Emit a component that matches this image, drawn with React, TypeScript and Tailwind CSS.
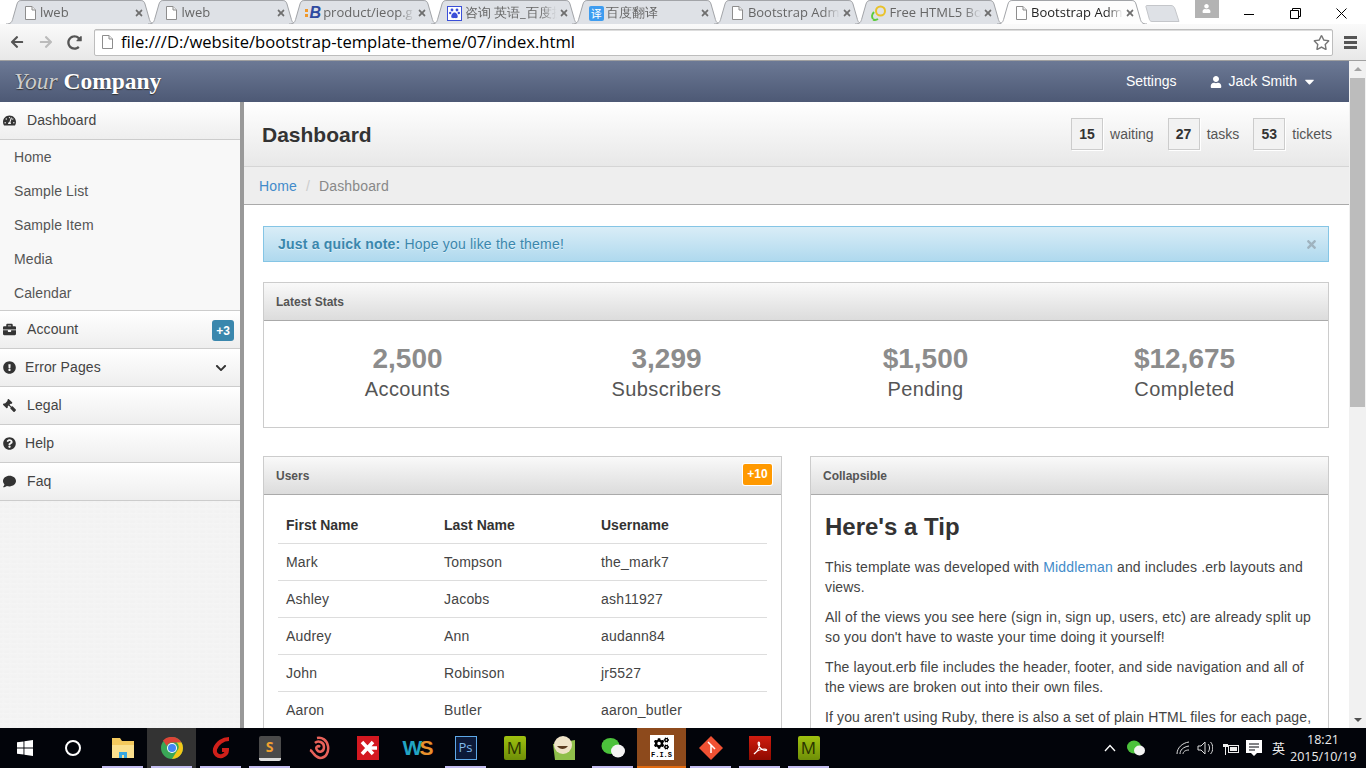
import type { ReactNode } from "react";
import {
  FaArrowLeft,
  FaArrowRight,
  FaBriefcase,
  FaCaretDown,
  FaChevronDown,
  FaCogs,
  FaComment,
  FaExclamationCircle,
  FaGavel,
  FaQuestionCircle,
  FaRedoAlt,
  FaRegStar,
  FaTachometerAlt,
  FaTimes,
  FaUser,
} from "react-icons/fa";

const rows = [
  ["Mark", "Tompson", "the_mark7"],
  ["Ashley", "Jacobs", "ash11927"],
  ["Audrey", "Ann", "audann84"],
  ["John", "Robinson", "jr5527"],
  ["Aaron", "Butler", "aaron_butler"],
];

const stats = [
  ["2,500", "Accounts"],
  ["3,299", "Subscribers"],
  ["$1,500", "Pending"],
  ["$12,675", "Completed"],
];

function DocIcon() {
  return (
    <svg width="11" height="14" viewBox="0 0 11 14" className="shrink-0">
      <path d="M.5.5h6.5l3.5 3.5v9.5h-10z" fill="#fff" stroke="#8d8d8d" />
      <path d="M7 .5v3.5h3.5" fill="#eee" stroke="#8d8d8d" />
    </svg>
  );
}

function Tab({ icon, title, active }: { icon: ReactNode; title: string; active?: boolean }) {
  return (
    <div className={`relative -mr-[8.430px] flex h-[24px] w-[150px] shrink-0 items-center pl-[16px] pr-[12px] pt-[2px] ${active ? "z-10" : ""}`}>
      <svg viewBox="0 0 150 24" width="150" height="24" className="absolute inset-0">
        <path
          d="M0 24 C5 24 6 22 7 18 L11 4 C12 1 13 .5 16 .5 H134 C137 .5 138 1 139 4 L143 18 C144 22 145 24 150 24"
          fill={active ? "#fdfdfd" : "#dee1e6"}
          stroke="#a2a4a8"
        />
      </svg>
      <span className="relative flex w-[16px] shrink-0 justify-center">{icon}</span>
      <span
        className={`relative ml-[2px] w-[92px] overflow-hidden whitespace-nowrap text-[13px] [mask-image:linear-gradient(to_right,black_82%,transparent)] ${active ? "text-[#222]" : "text-[#666]"}`}
      >
        {title}
      </span>
      <FaTimes className="relative ml-auto text-[10px] text-[#6e6e6e]" />
    </div>
  );
}

function BrowserChrome() {
  return (
    <div className="shrink-0 font-['Open_Sans',sans-serif]">
      <div className="flex h-[24px] items-start bg-white pl-[6px]">
        <Tab icon={<DocIcon />} title="lweb" />
        <Tab icon={<DocIcon />} title="lweb" />
        <Tab
          icon={
            <span className="flex items-center">
              <svg width="4" height="9" viewBox="0 0 4 9" fill="#f0982a">
                <rect width="3" height="3" />
                <rect y="5" width="3" height="3" />
              </svg>
              <span className="font-['Liberation_Sans',sans-serif] text-[16px] font-bold italic leading-none text-[#2f4aa0]">B</span>
            </span>
          }
          title="product/ieop.g"
        />
        <Tab
          icon={
            <span className="flex h-[15px] w-[15px] items-center justify-center border border-[#3b4fd8] bg-white">
              <svg width="11" height="11" viewBox="0 0 11 11" fill="#3b4fd8">
                <circle cx="3" cy="2" r="1.4" />
                <circle cx="8" cy="2" r="1.4" />
                <circle cx="1.2" cy="5" r="1.2" />
                <circle cx="9.8" cy="5" r="1.2" />
                <path d="M5.5 4.5c2 0 3.5 2.5 3.2 4.500-.3 1.500-2 1.200-3.200 1-1.200.2-2.900.5-3.200-1-.3-2 1.200-4.500 3.200-4.500z" />
              </svg>
            </span>
          }
          title="咨询 英语_百度搜"
        />
        <Tab
          icon={<span className="flex h-[15px] w-[15px] items-center justify-center rounded-[2px] bg-[#3d9cf0] font-['Noto_Sans_CJK_SC',sans-serif] text-[11px] leading-none text-white">译</span>}
          title="百度翻译"
        />
        <Tab icon={<DocIcon />} title="Bootstrap Adm" />
        <Tab
          icon={
            <svg width="16" height="16" viewBox="0 0 16 16" fill="none">
              <circle cx="9.500" cy="6" r="4.500" stroke="#e9c22a" strokeWidth="2" />
              <path d="M2 14c-1.500-2-1-5 1-7" stroke="#5ccb3c" strokeWidth="2" />
              <path d="M2 14.500c2 .8 3.500.5 5-.5" stroke="#5ccb3c" strokeWidth="2" />
            </svg>
          }
          title="Free HTML5 Bo"
        />
        <Tab icon={<DocIcon />} title="Bootstrap Adm" active />
        <svg width="36" height="17" viewBox="0 0 36 17" className="relative z-0 ml-[6px] mt-[5px] shrink-0">
          <path d="M2 .5H26C28 .5 29 1.500 30 4L34 16.500H7C5 16.500 4.500 15 4 13L1 2C.8 1 1 .5 2 .5z" fill="#dee1e6" stroke="#c4c6ca" />
        </svg>
        <div className="ml-[14px] flex h-[18px] w-[24px] shrink-0 justify-center bg-[#b3b3b3] pt-[4px]">
          <FaUser className="text-[9px] text-white" />
        </div>
        <div className="ml-auto flex h-[24px] shrink-0 items-center pr-[2px] pt-[2px] text-[#111]">
          <div className="flex w-[46px] justify-center">
            <span className="mt-[3px] h-[1px] w-[10px] bg-black" />
          </div>
          <div className="flex w-[46px] justify-center">
            <svg width="11" height="11" viewBox="0 0 11 11" fill="none" stroke="#000">
              <path d="M.5 2.500h8v8h-8zM2.500 2.500v-2h8v8h-2" />
            </svg>
          </div>
          <div className="flex w-[46px] justify-center">
            <svg width="11" height="11" viewBox="0 0 11 11" fill="none" stroke="#000">
              <path d="M.5.5l10 10M10.500.5l-10 10" />
            </svg>
          </div>
        </div>
      </div>
      <div className="flex h-[37px] items-center border-b border-[#a0a0a0] bg-gradient-to-b from-[#fafafa] to-[#e8e8e8]">
        <FaArrowLeft className="ml-[10px] text-[14px] text-[#555]" />
        <FaArrowRight className="ml-[15px] text-[14px] text-[#bbb]" />
        <FaRedoAlt className="ml-[14px] text-[15px] text-[#555]" />
        <div className="ml-[12px] flex h-[27px] w-[1239px] items-center rounded-[2px] border border-[#bdbdbd] bg-white pl-[7px] pr-[2px] shadow-[inset_0_1px_0_#ddd]">
          <DocIcon />
          <span className="ml-[8px] text-[16.600px] text-black">file:///D:/website/bootstrap-template-theme/07/index.html</span>
          <FaRegStar className="ml-auto text-[17px] text-[#777]" />
        </div>
        <div className="ml-[11px] flex w-[13px] flex-col gap-[2px]">
          <span className="h-[3px] bg-[#555]" />
          <span className="h-[3px] bg-[#555]" />
          <span className="h-[3px] bg-[#555]" />
        </div>
      </div>
    </div>
  );
}

function SideItem({ icon, label, gap = "ml-[11px]", right }: { icon: ReactNode; label: string; gap?: string; right?: ReactNode }) {
  return (
    <div className="flex h-[38px] items-center border-b border-[#ccc] bg-gradient-to-b from-white to-[#eee] pl-[3px] pr-[6px] text-[#444]">
      <span className="flex w-[13px] justify-center text-[13px] text-[#333]">{icon}</span>
      <span className={`${gap} text-[14px] tracking-[0.1px]`}>{label}</span>
      {right && <span className="ml-auto">{right}</span>}
    </div>
  );
}

function Sidebar() {
  return (
    <div className="w-[244px] shrink-0 border-r-[4px] border-[#999] bg-[#f2f2f2] bg-[repeating-linear-gradient(90deg,#f0f0f0_0px,#f4f4f4_3px,#f1f1f1_7px),repeating-linear-gradient(0deg,#f1f1f1_0px,#f5f5f5_5px)] [background-blend-mode:lighten]">
      <SideItem icon={<FaTachometerAlt />} label="Dashboard" />
      <div className="bg-[#f8f8f8]">
        {["Home", "Sample List", "Sample Item", "Media", "Calendar"].map((s) => (
          <div key={s} className="flex h-[34px] items-center pl-[14px] text-[14px] tracking-[0.1px] text-[#555]">
            {s}
          </div>
        ))}
      </div>
      <div className="border-t border-[#ccc]">
        <SideItem
          icon={<FaBriefcase />}
          label="Account"
          right={<span className="mt-[2px] flex h-[21px] w-[22px] items-center justify-center rounded-[3px] bg-[#3a87ad] text-[12px] font-bold text-white">+3</span>}
        />
      </div>
      <SideItem
        icon={<FaExclamationCircle />}
        label="Error Pages"
        gap="ml-[9px]"
        right={<FaChevronDown className="mr-[7px] text-[12px] text-[#333]" />}
      />
      <SideItem icon={<FaGavel className="-scale-x-100" />} label="Legal" />
      <SideItem icon={<FaQuestionCircle />} label="Help" gap="ml-[9px]" />
      <SideItem icon={<FaComment />} label="Faq" />
    </div>
  );
}

function Tag({ n, label }: { n: number; label: string }) {
  return (
    <div className="flex items-center">
      <span className="flex h-[32px] w-[32px] items-center justify-center border border-[#ccc] bg-[#f2f2f2] text-[14px] font-bold text-[#333] shadow-[1px_1px_0_#fff]">
        {n}
      </span>
      <span className="ml-[7px] text-[14px] text-[#555]">{label}</span>
    </div>
  );
}

function PanelHead({ title, right }: { title: string; right?: ReactNode }) {
  return (
    <div className="flex h-[38px] items-center justify-between border-b border-[#aaa] bg-gradient-to-b from-[#f9f9f9] to-[#dcdcdc] pl-[12px] pr-[9px]">
      <span className="text-[12px] font-bold text-[#555]">{title}</span>
      {right}
    </div>
  );
}

function Main() {
  return (
    <div className="min-w-0 flex-1 overflow-hidden bg-white">
      <div className="flex h-[65px] items-center justify-between border-b border-[#d5d5d5] bg-gradient-to-b from-white to-[#e8e8e8] pl-[18px] pr-[17px]">
        <h1 className="mt-[2px] text-[21px] font-bold text-[#333]">Dashboard</h1>
        <div className="flex gap-[14px]">
          <Tag n={15} label="waiting" />
          <Tag n={27} label="tasks" />
          <Tag n={53} label="tickets" />
        </div>
      </div>
      <div className="flex h-[38px] items-center border-b border-[#aaa] bg-[#eee] pl-[15px] pt-[1px] text-[14px] tracking-[0.15px]">
        <span className="text-[#428bca]">Home</span>
        <span className="mx-[9px] text-[#ccc]">/</span>
        <span className="text-[#888]">Dashboard</span>
      </div>
      <div className="pl-[19px] pr-[20px] pt-[21px]">
        <div className="flex h-[36px] items-center justify-between border border-[#85c5e5] bg-gradient-to-b from-[#d9edf7] to-[#afd9ee] pl-[14px] pr-[10px] text-[14px] tracking-[0.19px] text-[#3a87ad] [text-shadow:0_1px_0_rgba(255,255,255,0.5)]">
          <span>
            <b>Just a quick note:</b> Hope you like the theme!
          </span>
          <FaTimes className="text-[13px] text-[#9fb3bf]" />
        </div>
        <div className="mt-[20px] border border-[#ccc]">
          <PanelHead title="Latest Stats" />
          <div className="grid h-[106px] grid-cols-4 px-[14px] pt-[21px] text-center">
            {stats.map(([n, l]) => (
              <div key={l}>
                <div className="text-[28px] font-bold leading-[33px] text-[#8c8c8c]">{n}</div>
                <div className="text-[20px] leading-[28px] tracking-[0.4px] text-[#555]">{l}</div>
              </div>
            ))}
          </div>
        </div>
        <div className="mt-[28px] grid grid-cols-2 gap-[28px]">
          <div className="h-[400px] border border-[#ccc]">
            <PanelHead
              title="Users"
              right={<span className="-mt-[3px] flex h-[21px] w-[29px] items-center justify-center rounded-[2px] bg-[#f90] text-[12px] font-bold text-white shadow-[0_0_0_1px_#fff]">+10</span>}
            />
            <div className="px-[14px] pt-[12px]">
              <table className="w-full table-fixed text-[14px] text-[#333]">
                <thead>
                  <tr className="h-[36px] text-left">
                    <th className="w-[158px] px-[8px] pt-[1px] font-bold">First Name</th>
                    <th className="w-[157px] px-[8px] pt-[1px] font-bold">Last Name</th>
                    <th className="px-[8px] pt-[1px] font-bold">Username</th>
                  </tr>
                </thead>
                <tbody>
                  {rows.map((r) => (
                    <tr key={r[2]} className="h-[37px] border-t border-[#ddd] tracking-[0.2px] text-[#444]">
                      {r.map((c) => (
                        <td key={c} className="px-[8px] pt-[2px]">
                          {c}
                        </td>
                      ))}
                    </tr>
                  ))}
                </tbody>
              </table>
            </div>
          </div>
          <div className="h-[400px] border border-[#ccc]">
            <PanelHead title="Collapsible" />
            <div className="px-[14px] pt-[16px] text-[14px] leading-[20px] tracking-[0.13px] text-[#444]">
              <h2 className="mb-[14px] text-[24px] font-bold leading-[32px] tracking-normal text-[#333]">Here's a Tip</h2>
              <p className="mb-[10px]">
                This template was developed with <span className="text-[#428bca]">Middleman</span> and includes .erb layouts and views.
              </p>
              <p className="mb-[10px]">All of the views you see here (sign in, sign up, users, etc) are already split up so you don't have to waste your time doing it yourself!</p>
              <p className="mb-[10px]">The layout.erb file includes the header, footer, and side navigation and all of the views are broken out into their own files.</p>
              <p className="mb-[10px] whitespace-nowrap">If you aren't using Ruby, there is also a set of plain HTML files for each page,</p>
            </div>
          </div>
        </div>
      </div>
    </div>
  );
}

function Scrollbar() {
  return (
    <div className="flex w-[17px] shrink-0 flex-col items-center bg-[#f1f1f1]">
      <span className="mt-[6px] h-0 w-0 border-x-[4px] border-b-[4px] border-x-transparent border-b-[#a3a3a3]" />
      <span className="mt-[7px] h-[329px] w-[15px] bg-[#bcbcbc]" />
      <span className="mb-[6px] mt-auto h-0 w-0 border-x-[4px] border-t-[4px] border-x-transparent border-t-[#505050]" />
    </div>
  );
}

function TaskSlot({ children, running, active, className = "" }: { children?: ReactNode; running?: boolean; active?: boolean; className?: string }) {
  return (
    <div className={`relative flex h-[40px] w-[49px] shrink-0 items-center justify-center ${active ? "bg-[#333]" : ""} ${className}`}>
      {children}
      {running && <span className="absolute inset-x-[4px] bottom-0 h-[2px] bg-[#c3bdf0]" />}
    </div>
  );
}

function Square({ className, children }: { className: string; children: ReactNode }) {
  return <span className={`flex h-[24px] w-[22px] items-center justify-center ${className}`}>{children}</span>;
}

function Taskbar() {
  return (
    <div className="flex h-[40px] shrink-0 items-center bg-[#02040a] font-['Open_Sans',sans-serif] text-white">
      <TaskSlot>
        <svg width="16" height="16" viewBox="0 0 16 16" fill="#fff">
          <path d="M0 2.300L6.500 1.400V7.500H0zM7.400 1.300L16 0V7.500H7.400zM0 8.400H6.500V14.600L0 13.700zM7.400 8.400H16V16L7.400 14.700z" />
        </svg>
      </TaskSlot>
      <TaskSlot className="-ml-[1px] mr-[1px]">
        <span className="h-[16px] w-[16px] rounded-full border-[2px] border-white" />
      </TaskSlot>
      <TaskSlot running>
        <svg width="22" height="22" viewBox="0 0 22 22">
          <path d="M0 1h8l2 3h12v17H0z" fill="#f4c95d" />
          <path d="M0 8h22v13H0z" fill="#fbe08e" />
          <path d="M7 21v-6h8v6h-3v-3h-2v3z" fill="#37a6e0" />
        </svg>
      </TaskSlot>
      <TaskSlot running active>
        <svg width="22" height="22" viewBox="0 0 22 22">
          <circle cx="11" cy="11" r="11" fill="#3aa757" />
          <path d="M11 0a11 11 0 0 1 9.500 5.500H11A5.500 5.500 0 0 0 5.800 9L2 3.500A11 11 0 0 1 11 0z" fill="#dc4437" />
          <path d="M20.500 5.500A11 11 0 0 1 11 22l5-8a5.500 5.500 0 0 0-.5-8.500z" fill="#f5c518" />
          <circle cx="11" cy="11" r="5" fill="#fff" />
          <circle cx="11" cy="11" r="4" fill="#4285f4" />
        </svg>
      </TaskSlot>
      <TaskSlot running>
        <svg width="22" height="24" viewBox="0 0 22 24" fill="none" stroke="#d0201a" strokeWidth="4">
          <path d="M19 3c-6 0-12 4-14 10-1 5 3 8 7 7 3-1 5-3 5-6h-5" />
        </svg>
      </TaskSlot>
      <TaskSlot running>
        <span className="flex h-[25px] w-[22px] items-center justify-center rounded-[2px] border-b-[3px] border-[#ddd] bg-[#4a4a4a] text-[14px] font-bold text-[#f0a030]">S</span>
      </TaskSlot>
      <TaskSlot>
        <svg width="22" height="26" viewBox="0 0 22 26" fill="none" stroke="#e8625a" strokeWidth="2.500">
          <path d="M2 15c3 1 4 7 10 8 6 0 9-6 8-12C19 5 14 2 9 3M7 8c3-3 9-1 9 4s-5 6-7 3 1-5 3-3" />
        </svg>
      </TaskSlot>
      <TaskSlot>
        <Square className="bg-[#d41820]">
          <svg width="18" height="16" viewBox="0 0 18 16" fill="none" stroke="#fff" strokeWidth="3.500">
            <path d="M3 2l11 12M14 2L3 14M10 8h8" />
          </svg>
        </Square>
      </TaskSlot>
      <TaskSlot>
        <span className="font-['Liberation_Sans',sans-serif] text-[21px] font-bold tracking-[-3px] text-[#22a5c4]">
          W<span className="text-[#e8912d]">S</span>
        </span>
      </TaskSlot>
      <TaskSlot running>
        <Square className="border border-[#5ea9e8] bg-[#0c1a38] text-[13px] text-[#7ebbee]">Ps</Square>
      </TaskSlot>
      <TaskSlot>
        <Square className="rounded-[2px] bg-gradient-to-b from-[#9fc10f] to-[#6f8f08] text-[17px] text-[#2a3300]">M</Square>
      </TaskSlot>
      <TaskSlot>
        <svg width="24" height="28" viewBox="0 0 24 28">
          <path d="M1 10l22-4v20H3z" fill="#8fbf4a" />
          <circle cx="11" cy="11" r="9" fill="#efe3c8" />
          <path d="M5 12c3 4 8 4 11 0z" fill="#5a3a1e" />
        </svg>
      </TaskSlot>
      <TaskSlot running>
        <svg width="24" height="22" viewBox="0 0 24 22">
          <ellipse cx="9.500" cy="9" rx="9" ry="8" fill="#4cc23c" />
          <ellipse cx="17" cy="14" rx="7" ry="6.500" fill="#f4f4f4" />
        </svg>
      </TaskSlot>
      <TaskSlot className="border-b-[2px] border-[#e06a10] bg-[#8d4a1c]">
        <span className="flex h-[25px] w-[24px] flex-col items-center bg-white pt-[1px] text-black">
          <FaCogs className="text-[15px]" />
          <span className="font-['Liberation_Mono',monospace] text-[7px] font-bold leading-[8px]">F.I.S</span>
        </span>
      </TaskSlot>
      <TaskSlot running>
        <svg width="24" height="24" viewBox="0 0 24 24">
          <path d="M12 0l12 12-12 12L0 12z" fill="#f05133" />
          <path d="M9 6l3 3v8M12 9l4 4" stroke="#fff" strokeWidth="1.500" fill="none" />
        </svg>
      </TaskSlot>
      <TaskSlot running>
        <Square className="bg-gradient-to-b from-[#d01c10] to-[#8e0a00]">
          <svg width="16" height="16" viewBox="0 0 16 16" fill="none" stroke="#fff" strokeWidth="1.200">
            <path d="M2 14c3-2 5-6 5.500-9 .2-2-.2-3-.8-3s-.9 1.500 0 3.500c1 2.500 3 4.500 7 5 1.500 0 1-1.500-1-1.500-3 0-7 1-10.700 5z" />
          </svg>
        </Square>
      </TaskSlot>
      <TaskSlot running>
        <Square className="rounded-[2px] bg-gradient-to-b from-[#9fc10f] to-[#6f8f08] text-[17px] text-[#2a3300]">M</Square>
      </TaskSlot>
      <div className="ml-auto flex h-[40px] items-center pr-[10px]">
        <svg width="12" height="8" viewBox="0 0 12 8" fill="none" stroke="#fff" strokeWidth="1.300">
          <path d="M1 7l5-5.500L11 7" />
        </svg>
        <svg width="18" height="16" viewBox="0 0 18 16" className="ml-[11px]">
          <ellipse cx="7" cy="7" rx="7" ry="6.500" fill="#4cc23c" />
          <ellipse cx="12.500" cy="10.500" rx="5.500" ry="5" fill="#f4f4f4" />
        </svg>
        <svg width="14" height="14" viewBox="0 0 14 14" fill="none" stroke="#ddd" className="ml-[31px]">
          <path d="M1 13C1 7 6 2 13 1M4 13c0-4 3-7 9-8M7 13c0-2 2-4 6-4" />
        </svg>
        <svg width="16" height="14" viewBox="0 0 16 14" fill="none" stroke="#ddd" className="ml-[7px]">
          <path d="M1 5h3l4-4v12L4 9H1zM11 3c2 2 2 6 0 8M13.500 1c3 3 3 9 0 12" />
        </svg>
        <svg width="16" height="14" viewBox="0 0 16 14" className="ml-[10px]">
          <path d="M1 0v3M4 0v3M0 3h5v3H3v8H2V6H0z" fill="#eee" />
          <rect x="5.500" y="4.500" width="10" height="7" fill="none" stroke="#eee" />
          <rect x="7" y="6" width="7" height="4" fill="#eee" />
        </svg>
        <svg width="16" height="17" viewBox="0 0 16 17" className="ml-[7px]">
          <path d="M0 0h16v13h-5l-3 3-3-3H0z" fill="#fff" />
          <path d="M3 4h10M3 7h10M3 10h6" stroke="#02040a" />
        </svg>
        <span className="ml-[10px] font-['Noto_Sans_CJK_SC',sans-serif] text-[13px] text-[#eee]">英</span>
        <div className="ml-[5px] w-[66px] text-center text-[12.500px] leading-[17px] text-[#eee]">
          <div>18:21</div>
          <div className="whitespace-nowrap">2015/10/19</div>
        </div>
      </div>
    </div>
  );
}

export default function App() {
  return (
    <div className="flex h-[768px] w-[1366px] flex-col overflow-hidden bg-white font-['Liberation_Sans',Arial,sans-serif]">
      <BrowserChrome />
      <div className="flex min-h-0 flex-1">
        <div className="flex min-w-0 flex-1 flex-col">
          <div className="flex h-[41px] shrink-0 items-center justify-between bg-gradient-to-b from-[#6c7995] to-[#4d5975] pl-[14px] pr-[32px] text-[14px] text-white">
            <div className="font-['Liberation_Serif',serif] text-[23.500px] font-bold text-white [text-shadow:0_1px_1px_#333]">
              <span className="font-normal italic text-[#ccc]">Your</span> Company
            </div>
            <div className="flex items-center">
              <span>Settings</span>
              <FaUser className="ml-[33px] text-[12px]" />
              <span className="ml-[7px]">Jack Smith</span>
              <FaCaretDown className="ml-[5px] text-[15px]" />
            </div>
          </div>
          <div className="flex min-h-0 flex-1">
            <Sidebar />
            <Main />
          </div>
        </div>
        <Scrollbar />
      </div>
      <Taskbar />
    </div>
  );
}
